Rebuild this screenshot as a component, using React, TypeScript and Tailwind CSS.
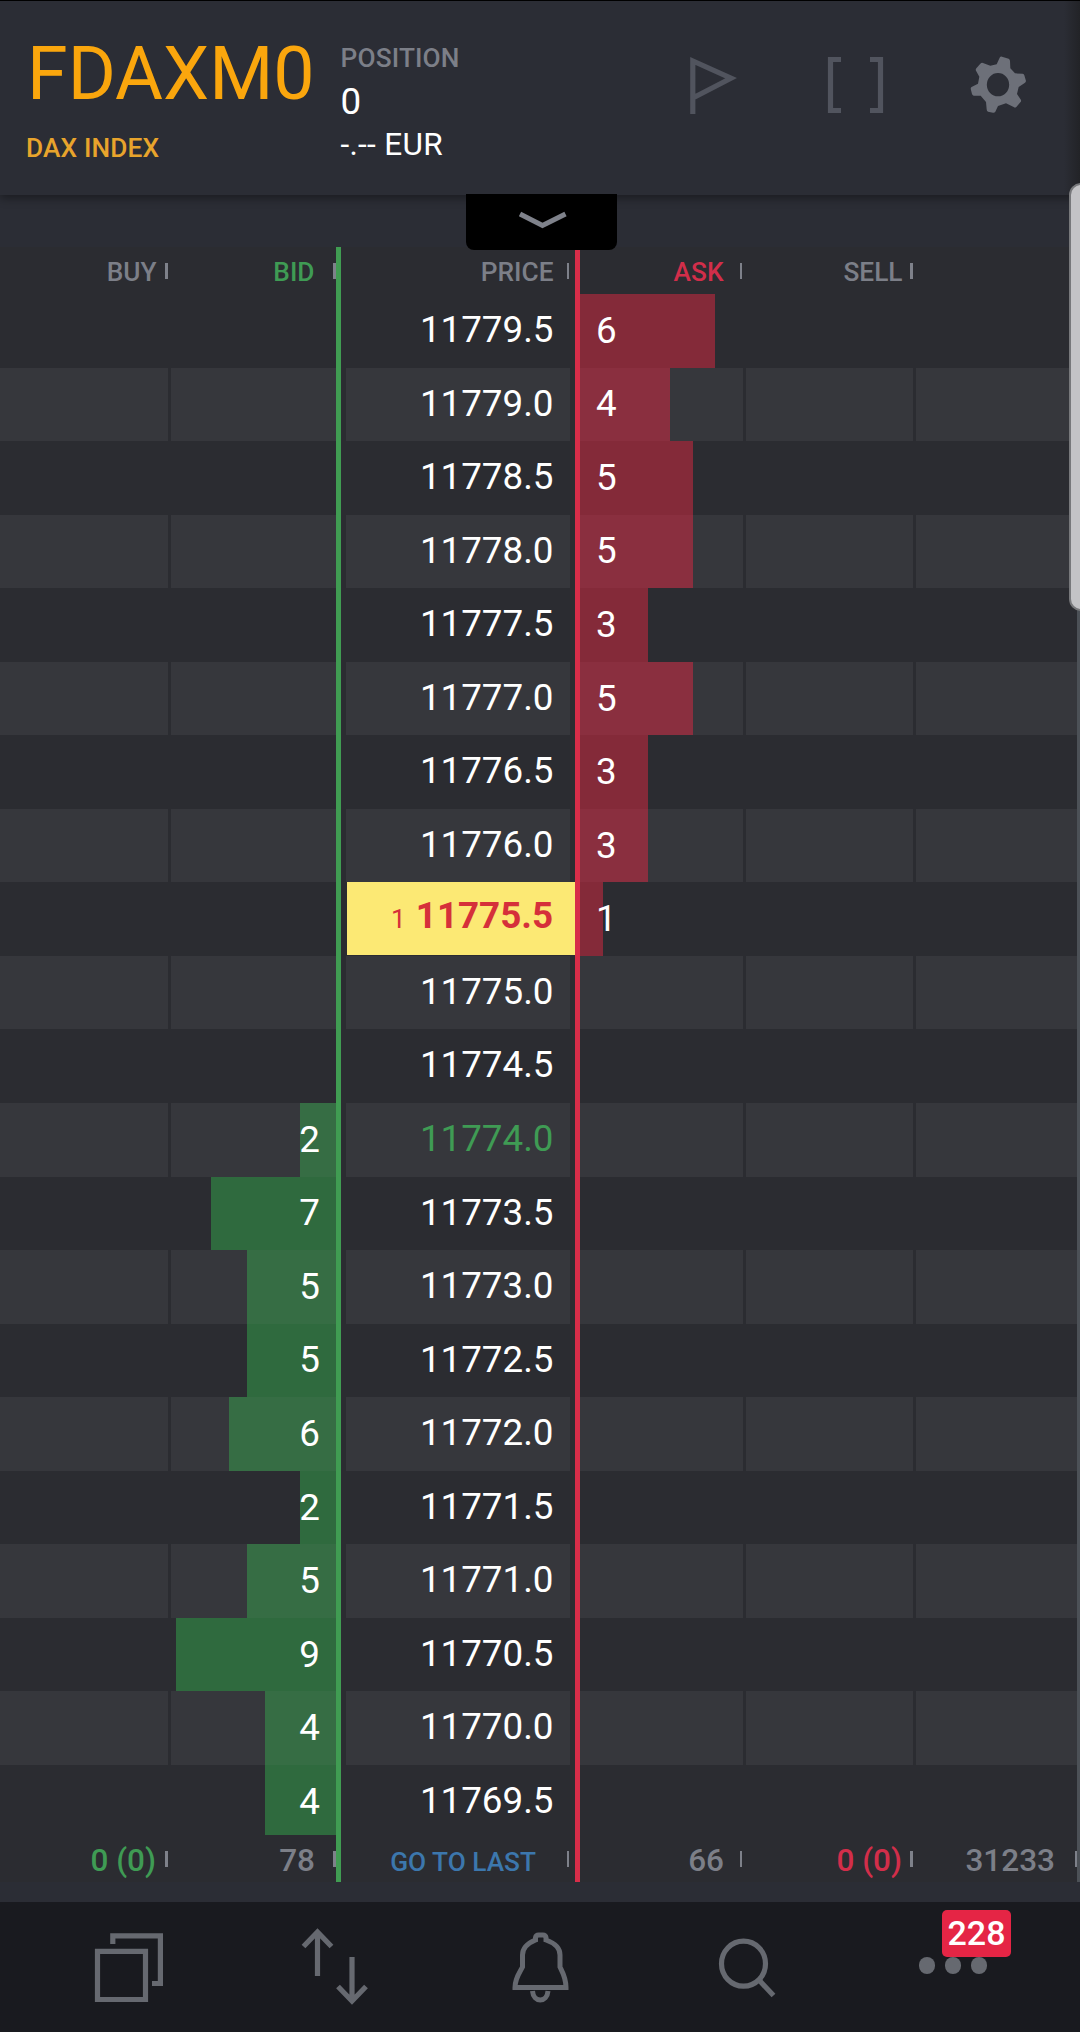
import React from "react";

type Row = { price: string; bid?: number; ask?: number; state?: "last" | "bid" };

const rows: Row[] = [
  { price: "11779.5", ask: 6 },
  { price: "11779.0", ask: 4 },
  { price: "11778.5", ask: 5 },
  { price: "11778.0", ask: 5 },
  { price: "11777.5", ask: 3 },
  { price: "11777.0", ask: 5 },
  { price: "11776.5", ask: 3 },
  { price: "11776.0", ask: 3 },
  { price: "11775.5", ask: 1, state: "last" },
  { price: "11775.0" },
  { price: "11774.5" },
  { price: "11774.0", bid: 2, state: "bid" },
  { price: "11773.5", bid: 7 },
  { price: "11773.0", bid: 5 },
  { price: "11772.5", bid: 5 },
  { price: "11772.0", bid: 6 },
  { price: "11771.5", bid: 2 },
  { price: "11771.0", bid: 5 },
  { price: "11770.5", bid: 9 },
  { price: "11770.0", bid: 4 },
  { price: "11769.5", bid: 4 },
];

const columns = "grid grid-cols-[168px_3px_165px_10px_224px_10px_163px_3px_167px_3px_161px_3px]";

function Header() {
  return (
    <header className="relative z-10 flex h-[195px] border-t border-black bg-[#2b2d35] shadow-[0_3px_9px_rgba(0,0,0,0.4)]">
      <div className="w-[340px] shrink-0 pl-[26px] text-[#faa60d]">
        <h1 className="mt-[28px] ml-px h-[90px] text-[73.5px] leading-[90px] whitespace-nowrap">FDAXM0</h1>
        <p className="mt-[13px] text-[26.25px] leading-[32px] font-medium tracking-[0.15px] text-[#e8a42c]">
          DAX INDEX
        </p>
      </div>
      <div className="flex-1 pl-[0.5px] text-white">
        <p className="mt-[41px] text-[26.25px] leading-[32px] font-medium tracking-[0.15px] text-[#7c7f88]">
          POSITION
        </p>
        <p className="mt-[6px] text-[36.75px] leading-[44px]">0</p>
        <p className="mt-[3px] text-[31.5px] leading-[36px] tracking-[0.3px]">-.-- EUR</p>
      </div>
      <svg className="absolute top-[-1px] left-[680px]" width="400" height="195" fill="none">
        <path d="M12.800 114V61L51 78.200L12.800 98" stroke="#51545e" strokeWidth="5.200" />
        <path d="M161 59.500H150.500V110.500H161M190 59.500H200.500V110.500H190" stroke="#51545e" strokeWidth="5.200" />
      </svg>
      <svg className="absolute top-[49px] left-[960px]" width="80" height="70" viewBox="0 0 240 210">
        <path
          fill="#6d7079"
          fillRule="evenodd"
          d="M126 20L146 26Q150 28 150 33L151 55L165 70L188 71Q192 72 193 76L198 93Q197 97 194 99L176 111L171 132L183 150Q184 154 181 157L169 171Q165 174 161 171L138 160L114 168L106 185Q103 189 99 188L84 185Q80 183 80 178L78 156L62 137L41 137Q37 136 36 132L32 116Q32 112 36 110L54 101L58 80L48 62Q46 58 49 55L61 41Q65 37 69 39L91 47L110 43L119 23Q121 19 126 20ZM114 69A33.500 35 0 1 0 114 139A33.500 35 0 1 0 114 69Z"
        />
      </svg>
      <div className="absolute inset-y-0 right-0 w-[16px] bg-linear-to-r from-transparent to-[#222327]" />
    </header>
  );
}

function Label({
  children,
  className,
  tick,
}: {
  children?: React.ReactNode;
  className: string;
  tick: string;
}) {
  return (
    <div className="flex items-center justify-end whitespace-nowrap">
      <span className={className}>{children}</span>
      <i className={tick + " mb-[2px] block h-4 shrink-0 bg-[#7e818a]"} />
    </div>
  );
}

function TableHead() {
  return (
    <div className={columns + " h-[47px] pt-[3px] text-[26.25px] leading-[32px] font-medium text-[#7c7f88]"}>
      <Label className="mr-[8.500px]" tick="w-[3px]">BUY</Label>
      <span />
      <Label className="mr-[18.500px] text-[#3f9b54]" tick="w-[3px]">BID</Label>
      <span />
      <Label className="mr-[13.500px]" tick="mr-px w-[2px]">PRICE</Label>
      <span />
      <Label className="mr-[16.500px] text-[#d22e4a]" tick="mr-px w-[2px]">ASK</Label>
      <span />
      <Label className="mr-[7.500px]" tick="w-[3px]">SELL</Label>
    </div>
  );
}

function TableFoot() {
  return (
    <div className={columns + " h-[47px] pt-[3px] text-[31.5px] leading-[36px] font-medium text-[#7c7f88]"}>
      <Label className="mr-[9px] pt-[2px] text-[#3f9b54]" tick="w-[3px]">0 (0)</Label>
      <span />
      <Label className="mr-[18px] pt-[2px]" tick="w-[3px]">78</Label>
      <span />
      <Label className="mr-[31px] pt-[5px] text-[26.25px] text-[#3c77ad]" tick="mr-px w-[2px]">
        GO TO LAST
      </Label>
      <span />
      <Label className="mr-[16px] pt-[2px]" tick="mr-px w-[2px]">66</Label>
      <span />
      <Label className="mr-[8px] pt-[2px] text-[#d22e4a]" tick="w-[3px]">0 (0)</Label>
      <span />
      <Label className="mr-[20px] pt-[2px]" tick="w-[2px]">31233</Label>
    </div>
  );
}

function LadderRow({ row, light, cut }: { row: Row; light: boolean; cut: boolean }) {
  const cell = light ? "bg-[#36373c]" : "bg-[#2b2c31]";
  return (
    <div className={cut ? "h-[70px] overflow-hidden" : "h-[73.55px]"}>
      <div className={columns + " h-[73.55px] text-[36.75px] leading-[44px] text-white"}>
        <div className={cell} />
        <span />
        <div className={cell + " flex justify-end"}>
          {row.bid !== undefined && (
            <div
              className={
                (light ? "bg-[#366d44]" : "bg-[#2f6a3e]") + " flex h-full items-center justify-end pr-[16px]"
              }
              style={{ width: row.bid * 17.8 }}
            >
              {row.bid}
            </div>
          )}
        </div>
        <span />
        {row.state === "last" ? (
          <div className="z-10 -mr-[5px] ml-px flex h-[73px] items-center justify-end bg-[#fce974] pr-[22px] pb-[5px] font-bold text-[#d5303a]">
            <span className="mt-[5px] mr-[10px] text-[26.25px] font-normal">1</span>
            {row.price}
          </div>
        ) : (
          <div
            className={
              cell +
              (row.state === "bid" ? " text-[#3f9b54]" : "") +
              " flex items-center justify-end pr-[16.500px] pb-[1.500px]"
            }
          >
            {row.price}
          </div>
        )}
        <span />
        <div className={cell}>
          {row.ask !== undefined && (
            <div
              className={(light ? "bg-[#8a2f3f]" : "bg-[#842a39]") + " flex h-full items-center pl-[16px]"}
              style={{ width: row.ask * 22.5 }}
            >
              {row.ask}
            </div>
          )}
        </div>
        <span />
        <div className={cell} />
        <span />
        <div className={cell} />
      </div>
    </div>
  );
}

function NavBar() {
  return (
    <nav className="grid h-[130px] grid-cols-5 bg-[#191a1f] text-[#666970]">
      <div>
        <svg width="206" height="130" fill="none" stroke="currentColor" strokeWidth="5.200">
          <path d="M97.500 49.300H145.500V97.500H97.500ZM112.800 42V33.800H160.400V81.500H152" />
        </svg>
      </div>
      <div className="-ml-px">
        <svg width="216" height="130" fill="none" stroke="currentColor" strokeWidth="5.200">
          <path d="M102.500 74V30M88.500 44.500L102.500 30L116.500 44.500M137 55V99M123 84.500L137 99L151 84.500" />
        </svg>
      </div>
      <div>
        <svg width="216" height="130" fill="none" stroke="currentColor" strokeWidth="5">
          <path d="M103.500 38V35.500Q104 33 106.500 33H111Q113.500 33 114 35.500V38C124 41.500 128 47 128 53V65C131 71 134 76 134 85.500H83C83 76 87.500 71 90.500 65V53C90.500 47 95 41.500 103.500 38Z" />
          <path d="M100.500 89C101.500 101 115 101 116 89" />
        </svg>
      </div>
      <div>
        <svg width="216" height="130" fill="none" stroke="currentColor" strokeWidth="5.200">
          <ellipse cx="95.500" cy="61.700" rx="22" ry="22.500" />
          <path d="M111 78L125.500 93.500" />
        </svg>
      </div>
      <div className="relative">
        <div className="flex gap-[10px] pt-[55px] pl-[54.500px]">
          <i className="h-[17px] w-[16px] rounded-full bg-current" />
          <i className="h-[17px] w-[16px] rounded-full bg-current" />
          <i className="h-[17px] w-[16px] rounded-full bg-current" />
        </div>
        <span className="absolute top-[8px] left-[78px] flex h-[47px] w-[69px] items-center justify-center rounded-[5px] bg-[#e52545] text-[34px] font-medium text-white">
          228
        </span>
      </div>
    </nav>
  );
}

export default function App() {
  return (
    <div className="relative h-[2032px] w-[1080px] overflow-hidden bg-[#2b2d35] font-['Roboto',sans-serif]">
      <Header />
      <div className="h-[52px]" />
      <main className="relative h-[1635px] bg-[#2b2c31]">
        <TableHead />
        {rows.map((row, i) => (
          <LadderRow key={row.price} row={row} light={i % 2 === 1} cut={i === rows.length - 1} />
        ))}
        <TableFoot />
        <i className="absolute inset-y-0 left-[336px] w-[5px] bg-[#409c52]" />
        <i className="absolute inset-y-0 left-[575px] z-20 w-[5px] bg-[#d72d49]" />
        <i className="absolute inset-y-0 left-[1077px] w-[3px] bg-[#4c5157]" />
      </main>
      <div className="h-[20px]" />
      <NavBar />
      <div className="absolute top-[194px] left-[466px] z-20 h-[56px] w-[151px] rounded-b-[8px] bg-black">
        <svg width="151" height="56" fill="none">
          <path d="M54 20L76.500 31.500L99.500 20" stroke="#7f828b" strokeWidth="5" />
        </svg>
      </div>
      <div className="absolute top-[183px] left-[1069px] z-30 h-[428px] w-[24px] rounded-[12px] border-2 border-[#77787b] bg-[#c3c3c6]" />
    </div>
  );
}
